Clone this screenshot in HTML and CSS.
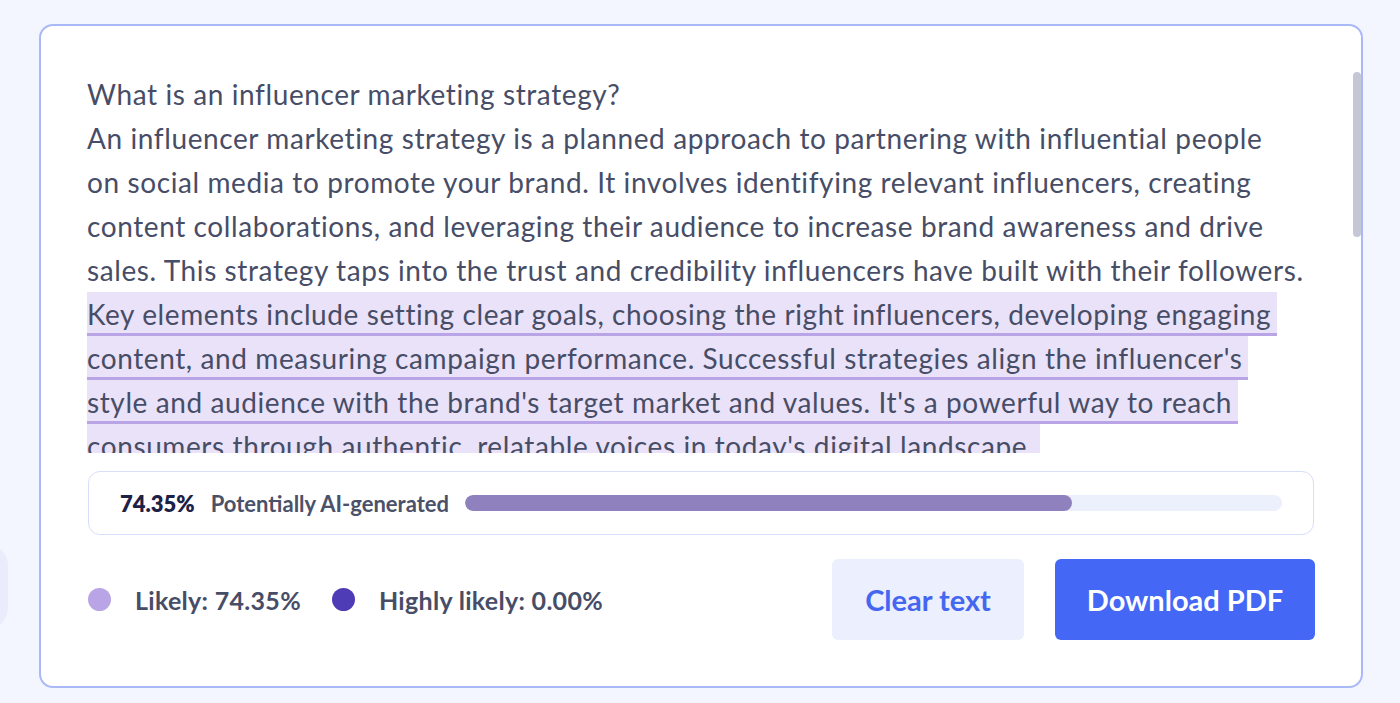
FILE: index.html
```html
<!DOCTYPE html>
<html lang="en">
<head>
<meta charset="utf-8">
<title>AI detector result</title>
<link rel="stylesheet" href="styles.css">
</head>
<body>
<div class="blob"></div>
<section class="card">
  <div class="editor">
    <p class="text">
      <span class="line">What is an influencer marketing strategy?</span>
      <span class="line">An influencer marketing strategy is a planned approach to partnering with influential people</span>
      <span class="line">on social media to promote your brand. It involves identifying relevant influencers, creating</span>
      <span class="line">content collaborations, and leveraging their audience to increase brand awareness and drive</span>
      <span class="line">sales. This strategy taps into the trust and credibility influencers have built with their followers.</span>
      <span class="line"><mark class="hl">Key elements include setting clear goals, choosing the right influencers, developing engaging</mark></span>
      <span class="line"><mark class="hl">content, and measuring campaign performance. Successful strategies align the influencer's</mark></span>
      <span class="line"><mark class="hl">style and audience with the brand's target market and values. It's a powerful way to reach</mark></span>
      <span class="line"><mark class="hl">consumers through authentic, relatable voices in today's digital landscape.</mark></span>
    </p>
  </div>
  <div class="thumb"></div>

  <div class="score">
    <span class="score-value">74.35%</span>
    <span class="score-label">Potentially AI-generated</span>
    <div class="bar"><div class="bar-fill" style="width: 74.35%"></div></div>
  </div>

  <div class="footer">
    <div class="legend">
      <span class="dot dot-likely"></span>
      <span class="legend-text">Likely: 74.35%</span>
      <span class="dot dot-high"></span>
      <span class="legend-text">Highly likely: 0.00%</span>
    </div>
    <div class="actions">
      <button class="btn btn-light">Clear text</button>
      <button class="btn btn-primary">Download PDF</button>
    </div>
  </div>
</section>
</body>
</html>
```

FILE: styles.css
```css
* { box-sizing: border-box; }

html, body {
  margin: 0;
  padding: 0;
}

body {
  background: #f3f6fe;
  font-family: Lato, "Noto Sans", sans-serif;
  color: #474d66;
  height: 703px;
  overflow: hidden;
  position: relative;
  padding-top: 24px;
}

.blob {
  position: absolute;
  left: -40px;
  top: 545px;
  width: 48px;
  height: 86px;
  background: #eaecfc;
  border-radius: 0 20px 24px 0;
}

.card {
  position: relative;
  margin-left: 39px;
  width: 1324px;
  height: 664px;
  background: #ffffff;
  border: 2px solid #a9b9f8;
  border-radius: 14px;
  padding: 0 46px 46px 46px;
  display: flex;
  flex-direction: column;
}

.editor {
  height: 427px;
  padding-top: 46px;
  overflow: hidden;
}

.text {
  margin: 0;
  font-size: 28px;
  letter-spacing: 0.6px;
  line-height: 44px;
  white-space: nowrap;
}

.line {
  display: block;
  height: 44px;
}

.hl {
  display: inline-block;
  vertical-align: top;
  height: 44px;
  line-height: 44px;
  background: #e9e2f8;
  color: inherit;
  border-bottom: 3px solid #b9a4e6;
  padding-right: 6px;
}

.thumb {
  position: absolute;
  right: 0;
  top: 46px;
  width: 8px;
  height: 165px;
  border-radius: 4px;
  background: #c5c7d6;
}

.score {
  margin-top: 18px;
  margin-left: 1px;
  margin-right: 1px;
  height: 64px;
  border: 1px solid #d7defa;
  border-radius: 12px;
  display: flex;
  align-items: center;
  padding: 0 31px 0 31px;
  font-size: 22px;
}

.score-value {
  font-weight: 800;
  color: #1d2146;
}

.score-label {
  margin-left: 16px;
  font-weight: 700;
  color: #4b5169;
}

.bar {
  flex: 1;
  margin-left: 16px;
  height: 16px;
  border-radius: 8px;
  background: #eceffc;
  overflow: hidden;
}

.bar-fill {
  height: 100%;
  border-radius: 8px;
  background: #8f80be;
}

.footer {
  margin-top: 24px;
  display: flex;
  align-items: center;
  justify-content: space-between;
}

.legend {
  display: flex;
  align-items: center;
  padding-left: 1px;
}

.dot {
  width: 23px;
  height: 23px;
  border-radius: 50%;
  flex: none;
}

.dot-likely { background: #b9a4e6; }
.dot-high { background: #4e3bb6; margin-left: 31px; }

.legend-text {
  margin-left: 24px;
  font-size: 25px;
  letter-spacing: 0.3px;
  font-weight: 700;
  color: #474d66;
}

.actions {
  display: flex;
  gap: 31px;
}

.btn {
  height: 81px;
  border: none;
  border-radius: 6px;
  font-family: inherit;
  font-size: 29px;
  font-weight: 700;
  padding: 0;
  cursor: pointer;
}

.btn-light {
  width: 192px;
  background: #eceffd;
  color: #4466f0;
}

.btn-primary {
  width: 260px;
  background: #4467f6;
  color: #ffffff;
}
```
